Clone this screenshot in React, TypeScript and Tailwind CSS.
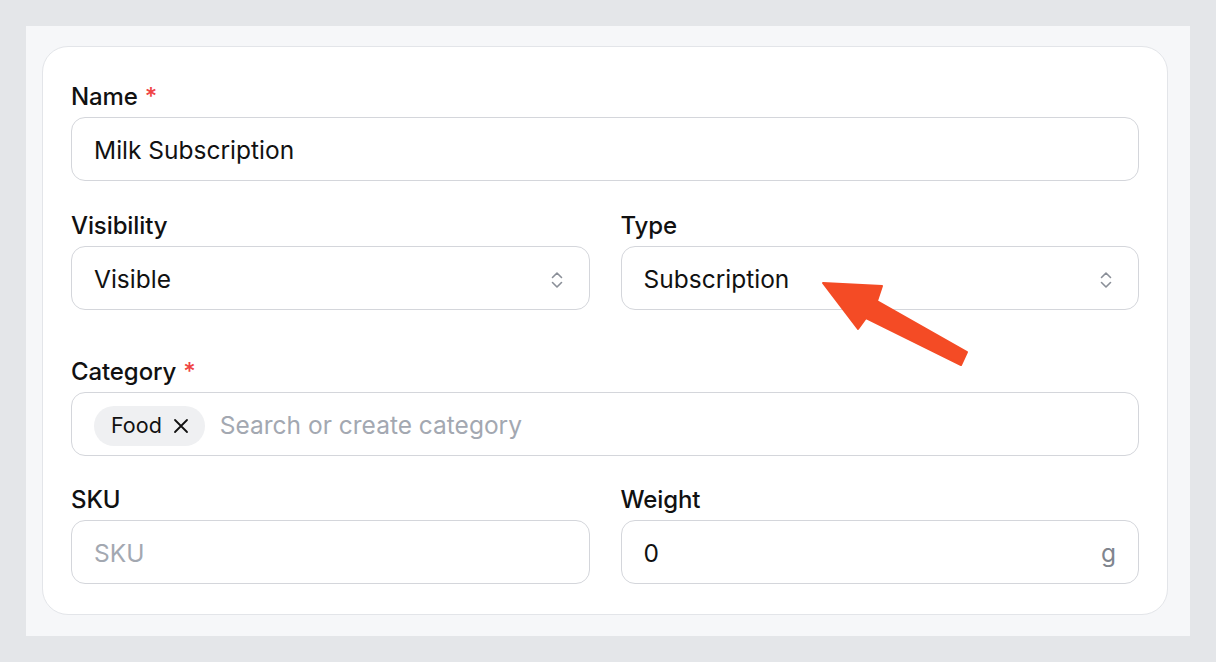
import React from 'react';

const font = { fontFamily: 'Inter, "Noto Sans", sans-serif' };

const Label = ({ text, required }: { text: string; required?: boolean }) => (
  <label className="block h-[28px] mb-[6px] text-[24px] leading-[28px] font-medium tracking-[-0.1px] text-[#111111]">
    {text}
    {required && <span className="ml-[7px] text-[#ef4444]">*</span>}
  </label>
);

const UpDown = () => (
  <svg width="14" height="20" viewBox="0 0 14 20" fill="none" stroke="#8a8f98" strokeWidth="1.6" strokeLinecap="round" strokeLinejoin="round">
    <path d="M2.5 7.5 7 3l4.5 4.5" />
    <path d="M2.5 12.5 7 17l4.5-4.5" />
  </svg>
);

const Box = ({ children, className = '' }: { children: React.ReactNode; className?: string }) => (
  <div
    className={`flex h-[64px] items-center rounded-[14px] border border-[#d4d6db] bg-white pl-[22px] pr-[22px] pt-[3px] text-[24.5px] text-[#111111] ${className}`}
  >
    {children}
  </div>
);

const Select = ({ value }: { value: string }) => (
  <Box className="justify-between pr-[25px]">
    <span>{value}</span>
    <UpDown />
  </Box>
);

export default function App() {
  return (
    <div className="relative min-h-[662px] w-full bg-[#e4e6e9] pt-[26px]" style={font}>
      <div className="mx-[26px] h-[610px] bg-[#f6f7f9] pl-[16px] pr-[22px] pt-[20px]">
        <div className="rounded-[26px] border border-[#e3e5e9] bg-white px-[28px] pt-[36px] pb-[30px]">
          <div>
            <Label text="Name" required />
            <Box>Milk Subscription</Box>
          </div>

          <div className="mt-[31px] grid grid-cols-2 gap-[31px]">
            <div>
              <Label text="Visibility" />
              <Select value="Visible" />
            </div>
            <div>
              <Label text="Type" />
              <Select value="Subscription" />
            </div>
          </div>

          <div className="mt-[48px]">
            <Label text="Category" required />
            <Box className="gap-[15px] pl-[21px] pt-[0px]">
              <span className="flex h-[40px] items-center gap-[11px] rounded-full bg-[#eff0f2] pl-[17px] pr-[16px] text-[21.5px] text-[#111111]">
                Food
                <svg width="16" height="16" viewBox="0 0 16 16" fill="none" stroke="#111111" strokeWidth="1.8" strokeLinecap="round">
                  <path d="M2 2l12 12M14 2 2 14" />
                </svg>
              </span>
              <span className="text-[#a3a8b1]">Search or create category</span>
            </Box>
          </div>

          <div className="mt-[30px] grid grid-cols-2 gap-[31px]">
            <div>
              <Label text="SKU" />
              <Box>
                <span className="text-[#a3a8b1]">SKU</span>
              </Box>
            </div>
            <div>
              <Label text="Weight" />
              <Box className="justify-between pr-[16px]">
                <span>0</span>
                <span className="text-[#80858e]">g</span>
              </Box>
            </div>
          </div>
        </div>
      </div>

      <svg
        className="pointer-events-none absolute left-0 top-0"
        width="1216"
        height="662"
        viewBox="0 0 1216 662"
      >
        <polygon
          points="823,283 882,286 877,301 967,352 961,365 866,318 858,329"
          fill="#f44b25"
          stroke="#f44b25"
          strokeWidth="2"
          strokeLinejoin="round"
        />
      </svg>
    </div>
  );
}
